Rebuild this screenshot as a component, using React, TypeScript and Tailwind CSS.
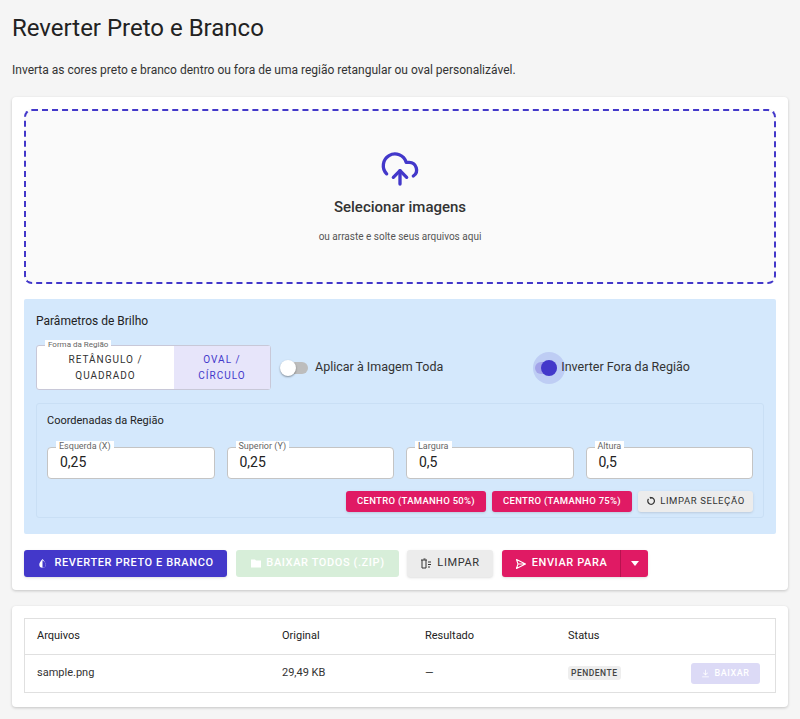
import React from "react";

const F = { fontFamily: "Roboto, 'Liberation Sans', sans-serif" };

function Field({ label, value }: { label: string; value: string }) {
  return (
    <div className="relative flex-1 h-[32px] bg-white border border-[#c4c4c4] rounded-[4px] flex items-center px-[12px] text-[14px] text-[#222]">
      <span className="absolute -top-[7px] left-[8px] px-[3px] bg-white text-[9px] leading-[11px] text-[#666]">{label}</span>
      {value}
    </div>
  );
}

export default function App() {
  return (
    <div style={F} className="w-[800px] h-[719px] bg-[#f5f5f5] overflow-hidden px-[12px] text-[#222]">
      <h1 className="pt-[13px] text-[24px] leading-[30px] font-normal text-[#222]">Reverter Preto e Branco</h1>
      <p className="mt-[19px] text-[12px] leading-[16px] text-[#333]">Inverta as cores preto e branco dentro ou fora de uma região retangular ou oval personalizável.</p>
      <div className="mt-[19px] bg-white rounded-[4px] shadow-[0_1px_3px_rgba(0,0,0,0.2)] p-[12px] h-[493px]">
        <div className="h-[175px] border-2 border-dashed border-[#4338ca] rounded-[8px] bg-[#fafafa] flex flex-col items-center pt-[38px]">
          <svg width="40" height="40" viewBox="0 0 24 24" fill="none" stroke="#4338ca" strokeWidth="2" strokeLinecap="round" strokeLinejoin="round">
            <path d="M12 13v8" />
            <path d="M4 14.9A7 7 0 1 1 15.7 8h1.8a4.5 4.5 0 0 1 2.5 8.2" />
            <path d="m8 17 4-4 4 4" />
          </svg>
          <div className="mt-[7px] text-[15px] font-medium text-[#333]">Selecionar imagens</div>
          <div className="mt-[10px] text-[10px] text-[#555]">ou arraste e solte seus arquivos aqui</div>
        </div>
        <div className="mt-[15px] h-[235px] bg-[#d4e8fc] rounded-[2px] px-[12px] pt-[13px]">
          <div className="text-[12px] text-[#222]">Parâmetros de Brilho</div>
          <div className="mt-[15px] flex items-center">
            <div className="relative flex border border-[#c8c8d8] rounded-[3px] h-[45px] w-[235px] bg-white">
              <span className="absolute -top-[6px] left-[8px] px-[3px] text-[8px] leading-[10px] text-[#666] bg-white">Forma da Região</span>
              <div className="w-[137px] flex items-center justify-center text-center text-[10px] leading-[16px] tracking-[1px] text-[#333]">RETÂNGULO /<br />QUADRADO</div>
              <div className="flex-1 bg-[#e7e5fa] flex items-center justify-center text-center text-[10px] leading-[16px] tracking-[1px] text-[#4338ca]">OVAL /<br />CÍRCULO</div>
            </div>
            <div className="ml-[11px] flex items-center">
              <div className="relative w-[26px] h-[12px] rounded-full bg-[#bdbdbd]">
                <div className="absolute -left-[2px] -top-[2px] w-[16px] h-[16px] rounded-full bg-white shadow-[0_1px_2px_rgba(0,0,0,0.4)]" />
              </div>
              <span className="ml-[7px] text-[12.5px] text-[#333]">Aplicar à Imagem Toda</span>
            </div>
            <div className="ml-[92px] flex items-center">
              <div className="relative w-[22px] h-[12px] rounded-full bg-[#b3b6ee]">
                <div className="absolute -left-[2px] -top-[10px] w-[32px] h-[32px] rounded-full bg-[#4338ca]/15" />
                <div className="absolute left-[6px] -top-[2px] w-[16px] h-[16px] rounded-full bg-[#4338ca]" />
              </div>
              <span className="ml-[4px] text-[12.5px] text-[#333]">Inverter Fora da Região</span>
            </div>
          </div>
          <div className="mt-[13px] h-[115px] border border-[#c9dff5] rounded-[3px] px-[10px] pt-[9px]">
            <div className="text-[11px] text-[#222]">Coordenadas da Região</div>
            <div className="mt-[17px] flex gap-[12px]">
              <Field label="Esquerda (X)" value="0,25" />
              <Field label="Superior (Y)" value="0,25" />
              <Field label="Largura" value="0,5" />
              <Field label="Altura" value="0,5" />
            </div>
            <div className="mt-[12px] flex justify-end gap-[6px]">
              <button className="h-[21px] w-[140px] rounded-[3px] bg-[#e01a64] text-white text-[9.5px] font-medium tracking-[0.3px] shadow">CENTRO (TAMANHO 50%)</button>
              <button className="h-[21px] w-[140px] rounded-[3px] bg-[#e01a64] text-white text-[9.5px] font-medium tracking-[0.3px] shadow">CENTRO (TAMANHO 75%)</button>
              <button className="h-[21px] w-[115px] rounded-[3px] bg-[#ececec] text-[#333] text-[9.5px] tracking-[0.6px] shadow flex items-center justify-center gap-[4px]">
                <svg width="10" height="10" viewBox="0 0 24 24" fill="none" stroke="#333" strokeWidth="3"><path d="M12 4a8 8 0 1 1-6 3" /><path d="M9 3l3 1-1 3" /></svg>
                LIMPAR SELEÇÃO</button>
            </div>
          </div>
        </div>
        <div className="mt-[16px] flex items-center">
          <button className="h-[27px] w-[203px] rounded-[3px] bg-[#4338ca] text-white text-[11px] font-medium tracking-[0.6px] shadow flex items-center justify-center gap-[6px]">
            <svg width="11" height="11" viewBox="0 0 24 24"><path d="M12 2C8 7 5 10.5 5 14a7 7 0 0 0 14 0c0-3.5-3-7-7-12z" fill="white" /><path d="M12 5v16a7 7 0 0 0 7-7c0-3-3-6-7-9z" fill="#4338ca" /></svg>
            REVERTER PRETO E BRANCO</button>
          <button className="ml-[9px] h-[27px] w-[163px] rounded-[3px] bg-[#d7eed9] text-white text-[11px] font-medium tracking-[0.6px] flex items-center justify-center gap-[4px]">
            <svg width="12" height="11" viewBox="0 0 24 20"><path d="M2 2h8l2 2h10v14H2z" fill="white" /></svg>
            BAIXAR TODOS (.ZIP)</button>
          <button className="ml-[8px] h-[27px] w-[86px] rounded-[3px] bg-[#ececec] text-[#333] text-[11px] tracking-[0.6px] shadow flex items-center justify-center gap-[5px]">
            <svg width="12" height="11" viewBox="0 0 24 22" fill="none" stroke="#333" strokeWidth="2"><path d="M2 4h12M4 4v16h8V4M7 2h4M16 8h6M16 13h6M16 18h4" /></svg>
            LIMPAR</button>
          <div className="ml-[9px] flex h-[27px] rounded-[3px] bg-[#e01a64] shadow text-white">
            <button className="w-[118px] text-[11px] font-medium tracking-[0.6px] flex items-center justify-center gap-[5px]">
              <svg width="12" height="12" viewBox="0 0 24 24" fill="none" stroke="white" strokeWidth="2.2" strokeLinejoin="round"><path d="M3 3l18 9-18 9 3-9z M6 12h15" /></svg>
              ENVIAR PARA</button>
            <div className="w-[1px] bg-[#b8124f]" />
            <div className="w-[27px] flex items-center justify-center"><svg width="8" height="5" viewBox="0 0 8 5"><path d="M0 0h8L4 5z" fill="white" /></svg></div>
          </div>
        </div>
      </div>
      <div className="mt-[16px] bg-white rounded-[4px] shadow-[0_1px_3px_rgba(0,0,0,0.2)] p-[12px] pb-[14px]">
        <div className="border border-[#e0e0e0] text-[11px]">
          <div className="flex h-[36px] items-center border-b border-[#e0e0e0] text-[#222]">
            <div className="pl-[12px] w-[257px]">Arquivos</div>
            <div className="w-[143px]">Original</div>
            <div className="w-[143px]">Resultado</div>
            <div>Status</div>
          </div>
          <div className="flex h-[37px] items-center text-[#333]">
            <div className="pl-[12px] w-[257px]">sample.png</div>
            <div className="w-[143px]">29,49 KB</div>
            <div className="w-[143px]">—</div>
            <div className="w-[123px]"><span className="px-[3px] py-[2px] rounded-[3px] bg-[#eeeeee] text-[8.5px] font-medium tracking-[0.5px] text-[#444]">PENDENTE</span></div>
            <button className="h-[21px] w-[69px] rounded-[3px] bg-[#dcdaf6] text-white text-[9px] font-medium tracking-[0.6px] flex items-center justify-center gap-[4px]">
              <svg width="9" height="9" viewBox="0 0 24 24" fill="white"><path d="M11 2h2v11l4-4 1.5 1.5L12 17l-6.5-6.5L7 9l4 4zM3 20h18v2H3z" /></svg>BAIXAR</button>
          </div>
        </div>
      </div>
    </div>
  );
}
